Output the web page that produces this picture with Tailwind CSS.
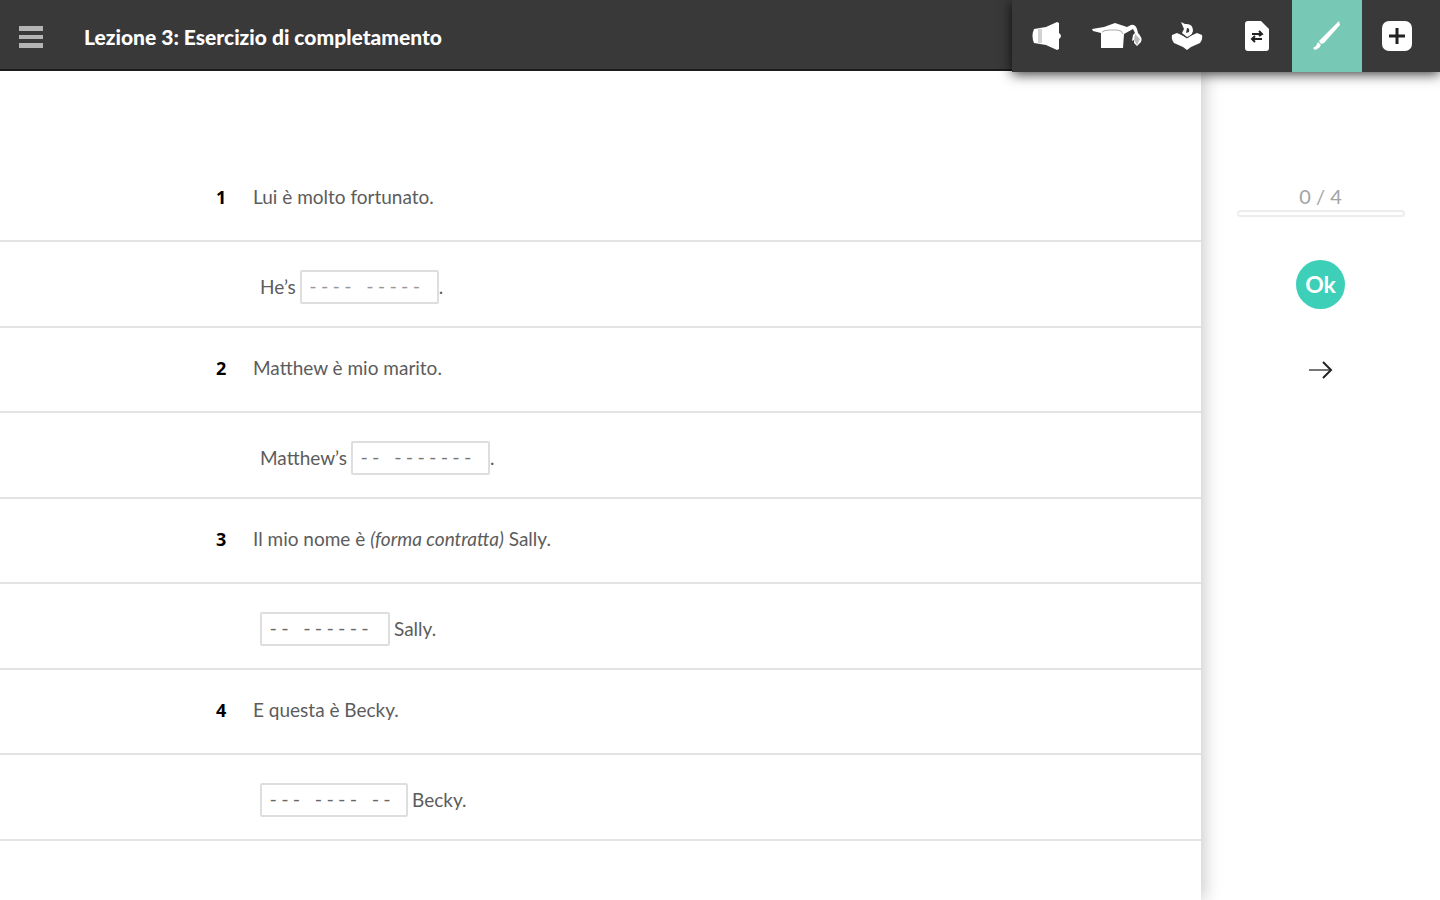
<!DOCTYPE html>
<html lang="it">
<head>
<meta charset="utf-8">
<meta name="viewport" content="width=device-width, initial-scale=1">
<title>Lezione 3: Esercizio di completamento</title>
<script src="https://cdn.jsdelivr.net/npm/@tailwindcss/browser@4"></script>
</head>
<body class="flex min-h-screen flex-col bg-white font-['Lato',sans-serif] text-[#5c5c5c]">
<header class="relative z-10 flex h-[71px] items-stretch border-b-2 border-[#1c1c1c] bg-[#393939]">
  <button type="button" aria-label="Menu" class="flex w-[62px] items-center justify-center pt-1">
    <svg class="h-6 w-6" viewBox="0 0 24 24" fill="#b4b4b4"><path d="M0 1h24v5H0zM0 10h24v4H0zM0 18h24v5H0z"/></svg>
  </button>
  <h1 class="flex flex-1 items-center pt-1 pl-[22px] text-[21px] font-black text-white">Lezione 3: Esercizio di completamento</h1>
  <nav aria-label="Strumenti" class="flex h-[72px] bg-[#393939] pr-2 shadow-[0_2px_12px_rgba(0,0,0,0.8)]">
    <button type="button" aria-label="Audio" class="flex w-[70px] items-center justify-center">
      <svg class="h-[30px] w-[30px]" viewBox="0 0 30 30"><path d="M2 8 14 6 25 1 27 2V12Q31 15 27 18V28L25 29 14 24 2 22Q-1 15 2 8z" fill="#fff"/><path d="M6 8h4v14H6z" fill="#d2d2d2"/></svg>
    </button>
    <button type="button" aria-label="Lezione" class="flex w-[70px] items-center justify-center">
      <svg class="h-[30px] w-[52px]" viewBox="0 0 52 30"><path d="M1 8 13 6 24 2 36 6 40 4Q44 3 46 8L47 12Q52 17 50 21L46 25 43 22V19L41 20 42 14 44 12 42 8 33 13 32 27H10L10 12 2 10z" fill="#fff"/><path d="M11 11Q13 9 19 9h7Q31 9 32 13" fill="none" stroke="#aaa" stroke-width="1"/><path d="m44 13 5 5-3 6-3-5z" fill="#bbb"/></svg>
    </button>
    <button type="button" aria-label="Lettura" class="flex w-[70px] items-center justify-center">
      <svg class="h-8 w-8" viewBox="0 0 32 32"><path d="M1 15 6 13Q11 15 16 18 21 15 26 13L31 15Q32 19 29 23L20 27 16 30 12 27 3 23Q0 19 1 15z" fill="#fff"/><path d="M10 2 14 4Q22 3 22 11L20 16 16 17 11 13 13 9z" fill="#fff"/><path d="M16 8q3 0 2 4l-3 1z" fill="#393939"/><path d="m9 13 7 5 7-5" fill="none" stroke="#393939" stroke-width="1"/></svg>
    </button>
    <button type="button" aria-label="Documento" class="flex w-[70px] items-center justify-center">
      <svg class="h-[30px] w-6" viewBox="0 0 24 30"><path d="M3 0h13l8 8v19q0 3-3 3H3q-3 0-3-3V3q0-3 3-3z" fill="#fff"/><path d="M7 13h10M14 10l3 3-3 2M17 18H7M10 15l-3 3 3 3" fill="none" stroke="#222" stroke-width="2"/></svg>
    </button>
    <button type="button" aria-label="Esercizi" aria-pressed="true" class="flex w-[70px] items-center justify-center bg-[#77c9b6]">
      <svg class="h-[30px] w-7" viewBox="0 0 28 30"><path d="M26 0 27 4 11 22 8 23 6 20z" fill="#fff"/><path d="M5 21 8 24 6 27 2 29 0 27 3 25z" fill="#fff"/></svg>
    </button>
    <button type="button" aria-label="Aggiungi" class="flex w-[70px] items-center justify-center">
      <svg class="h-[30px] w-[30px]" viewBox="0 0 30 30"><rect width="30" height="30" rx="7" fill="#fff"/><path d="M15 7v16M7 15h16" stroke="#222" stroke-width="3"/></svg>
    </button>
  </nav>
</header>
<div class="flex flex-1">
  <main class="flex-1 bg-white pt-[86px] text-[19px] shadow-[4px_0_16px_rgba(0,0,0,0.2)]">
    <ol>
      <li>
        <p class="flex h-[85px] items-center border-b-2 border-[#e3e3e3] pb-0.5 pl-[216px]"><b class="w-[37px] font-['Open_Sans',sans-serif] text-[18px] text-black">1</b><span>Lui è molto fortunato.</span></p>
        <div class="flex h-[86px] items-center gap-1 border-b-2 border-[#e3e3e3] pt-1.5 pl-[260px]"><label for="a1">He’s</label><span class="flex items-center"><input id="a1" type="text" placeholder="- - - -   - - - - -" class="h-[34px] w-[139px] rounded-xs border-2 border-[#dedede] px-2 pb-1 font-['Open_Sans',sans-serif] text-[20px] placeholder:text-[#999]">.</span></div>
      </li>
      <li>
        <p class="flex h-[85px] items-center border-b-2 border-[#e3e3e3] pb-0.5 pl-[216px]"><b class="w-[37px] font-['Open_Sans',sans-serif] text-[18px] text-black">2</b><span>Matthew è mio marito.</span></p>
        <div class="flex h-[86px] items-center gap-1 border-b-2 border-[#e3e3e3] pt-1.5 pl-[260px]"><label for="a2">Matthew’s</label><span class="flex items-center"><input id="a2" type="text" placeholder="- -   - - - - - - -" class="h-[34px] w-[139px] rounded-xs border-2 border-[#dedede] px-2 pb-1 font-['Open_Sans',sans-serif] text-[20px] placeholder:text-[#777]">.</span></div>
      </li>
      <li>
        <p class="flex h-[85px] items-center border-b-2 border-[#e3e3e3] pb-0.5 pl-[216px]"><b class="w-[37px] font-['Open_Sans',sans-serif] text-[18px] text-black">3</b><span>Il mio nome è <i>(forma contratta)</i> Sally.</span></p>
        <div class="flex h-[86px] items-center gap-1 border-b-2 border-[#e3e3e3] pt-1.5 pl-[260px]"><input id="a3" type="text" placeholder="- -   - - - - - -" class="h-[34px] w-[130px] rounded-xs border-2 border-[#dedede] px-2 pb-1 font-['Open_Sans',sans-serif] text-[20px] placeholder:text-[#666]"><label for="a3">Sally.</label></div>
      </li>
      <li>
        <p class="flex h-[85px] items-center border-b-2 border-[#e3e3e3] pb-0.5 pl-[216px]"><b class="w-[37px] font-['Open_Sans',sans-serif] text-[18px] text-black">4</b><span>E questa è Becky.</span></p>
        <div class="flex h-[86px] items-center gap-1 border-b-2 border-[#e3e3e3] pt-1.5 pl-[260px]"><input id="a4" type="text" placeholder="- - -   - - - -   - -" class="h-[34px] w-[148px] rounded-xs border-2 border-[#dedede] px-2 pb-1 font-['Open_Sans',sans-serif] text-[20px] placeholder:text-[#666]"><label for="a4">Becky.</label></div>
      </li>
    </ol>
  </main>
  <aside class="flex w-[239px] flex-col items-center pt-[113px]">
    <p class="text-[20px] leading-6 text-[#a3a3a3]">0 / 4</p>
    <div role="progressbar" aria-label="Progresso" aria-valuenow="0" aria-valuemin="0" aria-valuemax="4" class="mt-0.5 h-[7px] w-[168px] rounded-sm border-2 border-[#ededed]"></div>
    <button type="button" class="mt-[43px] h-[49px] w-[49px] rounded-full bg-[#3ecfb9] text-[23px] font-bold text-white">Ok</button>
    <button type="button" aria-label="Avanti" class="mt-[49px] flex h-6 w-6 items-center justify-center">
      <svg class="h-6 w-6" viewBox="0 0 24 24" fill="none"><path d="M0 12h21" stroke="#777" stroke-width="2"/><path d="m14 4 8 8-8 8" stroke="#222" stroke-width="2"/></svg>
    </button>
  </aside>
</div>
</body>
</html>
